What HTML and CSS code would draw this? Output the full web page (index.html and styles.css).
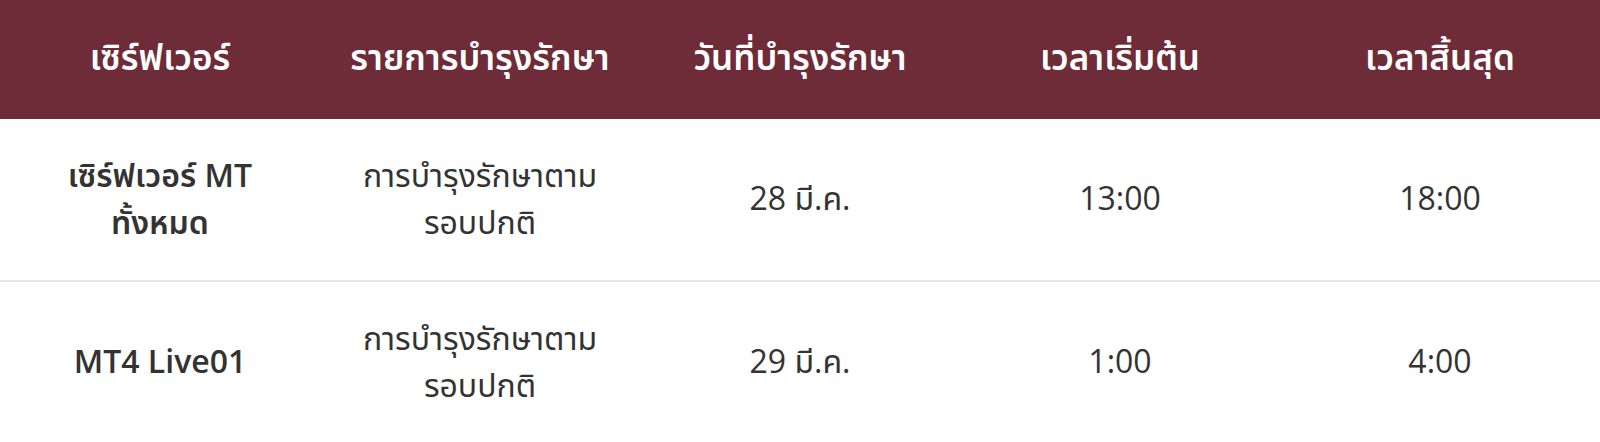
FILE: index.html
```html
<!DOCTYPE html>
<html lang="th">
<head>
<meta charset="utf-8">
<link rel="stylesheet" href="styles.css">
</head>
<body>
<div class="table">
  <div class="row head">
    <div class="cell">เซิร์ฟเวอร์</div>
    <div class="cell">รายการบำรุงรักษา</div>
    <div class="cell">วันที่บำรุงรักษา</div>
    <div class="cell">เวลาเริ่มต้น</div>
    <div class="cell">เวลาสิ้นสุด</div>
  </div>
  <div class="row body first">
    <div class="cell name">เซิร์ฟเวอร์ MT<br>ทั้งหมด</div>
    <div class="cell">การบำรุงรักษาตาม<br>รอบปกติ</div>
    <div class="cell">28 มี.ค.</div>
    <div class="cell">13:00</div>
    <div class="cell">18:00</div>
  </div>
  <div class="row body">
    <div class="cell name">MT4 Live01</div>
    <div class="cell">การบำรุงรักษาตาม<br>รอบปกติ</div>
    <div class="cell">29 มี.ค.</div>
    <div class="cell">1:00</div>
    <div class="cell">4:00</div>
  </div>
</div>
</body>
</html>
```
FILE: styles.css
```css
html, body {
  margin: 0;
  padding: 0;
  background: #ffffff;
}
body {
  font-family: "Open Sans", "Noto Sans Thai", sans-serif;
  color: #333333;
}
.row {
  display: grid;
  grid-template-columns: repeat(5, 320px);
  align-items: center;
}
.cell {
  text-align: center;
}
.head {
  background: #6e2b38;
  color: #ffffff;
  height: 119px;
  font-size: 35px;
  font-weight: 600;
}
.body {
  height: 157px;
  padding-bottom: 4px;
  font-size: 32px;
  line-height: 47px;
}
.first {
  border-bottom: 2px solid #e5e5e5;
}
.name {
  font-weight: 600;
}
```
